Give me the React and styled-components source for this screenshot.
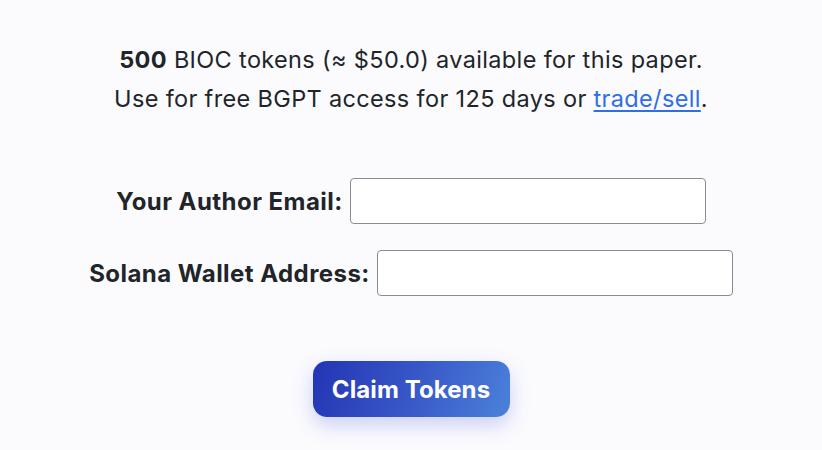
import React from 'react';
import styled, { createGlobalStyle } from 'styled-components';

const GlobalStyle = createGlobalStyle`
  html, body {
    margin: 0;
    padding: 0;
    background: #fbfbfe;
  }
  body {
    font-family: Inter, "Noto Sans", sans-serif;
    color: #212529;
  }
`;

const Page = styled.div`
  width: 822px;
  height: 450px;
  display: flex;
  flex-direction: column;
  align-items: center;
  padding-top: 40px;
  box-sizing: border-box;
`;

const Intro = styled.p`
  margin: 0;
  font-size: 23.5px;
  line-height: 39px;
  text-align: center;
  letter-spacing: 0.35px;

  strong {
    font-weight: 700;
  }

  a {
    color: #2f6ee8;
    text-decoration: underline;
    text-underline-offset: 3px;
  }
`;

const Form = styled.form`
  margin-top: 60px;
  display: flex;
  flex-direction: column;
  align-items: center;
  gap: 26px;
`;

const Row = styled.div`
  display: flex;
  align-items: center;
  gap: 7px;
`;

const Label = styled.label`
  font-size: 24px;
  font-weight: 700;
  letter-spacing: 0.45px;
`;

const Input = styled.input`
  width: 356px;
  height: 46px;
  box-sizing: border-box;
  border: 1px solid #8b8b96;
  border-radius: 4px;
  background: #fff;
  font-size: 16px;
  padding: 0 10px;
`;

const ClaimButton = styled.button`
  margin-top: 65px;
  width: 197px;
  height: 56px;
  border: none;
  border-radius: 14px;
  background: linear-gradient(110deg, #2334b4 0%, #3a5bc9 55%, #4b82da 100%);
  color: #fff;
  font-family: Inter, "Noto Sans", sans-serif;
  font-size: 24px;
  font-weight: 700;
  letter-spacing: 0.1px;
  box-shadow: 0 8px 20px rgba(60, 80, 210, 0.25);
  cursor: pointer;
`;

const App = () => {
  return (
    <Page>
      <GlobalStyle />
      <Intro>
        <strong>500</strong> BIOC tokens (≈ $50.0) available for this paper.
        <br />
        Use for free BGPT access for 125 days or <a href="#">trade/sell</a>.
      </Intro>
      <Form onSubmit={(e) => e.preventDefault()}>
        <Row>
          <Label htmlFor="email">Your Author Email:</Label>
          <Input id="email" type="email" />
        </Row>
        <Row>
          <Label htmlFor="wallet">Solana Wallet Address:</Label>
          <Input id="wallet" type="text" />
        </Row>
      </Form>
      <ClaimButton type="button">Claim Tokens</ClaimButton>
    </Page>
  );
};

export default App;
